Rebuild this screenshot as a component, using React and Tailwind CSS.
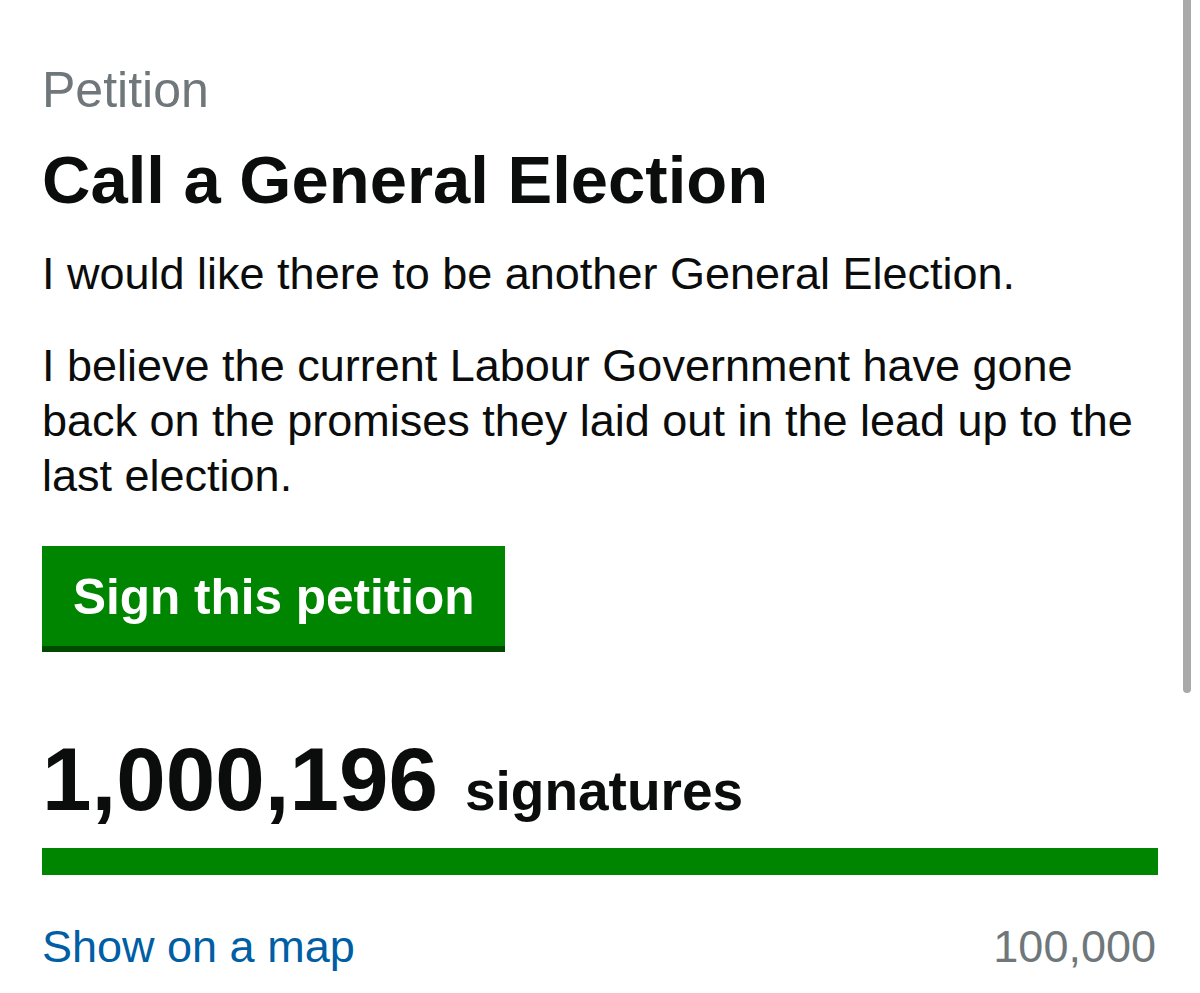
export default function App() {
    return (
        <div className="relative w-[1200px] h-[993px] bg-white overflow-hidden" style={{ fontFamily: '"Liberation Sans", Arial, Helvetica, sans-serif' }}>
            <div className="px-[42px] pt-[60px] text-[#0b0c0c]">
                <p className="text-[50px] leading-[60px] text-[#6f777b]">Petition</p>
                <h1 className="mt-[20px] text-[67px] leading-[79px] font-bold">Call a General Election</h1>
                <p className="mt-[27px] text-[45px] leading-[55px]">I would like there to be another General Election.</p>
                <p className="mt-[37px] text-[45px] leading-[55px]">
                    I believe the current Labour Government have gone back on the promises they laid out in the lead up to the last election.
                </p>
                <button className="mt-[43px] flex items-start h-[106px] pt-[22px] px-[31px] bg-[#008500] border-b-[6px] border-[#004a00] text-white text-[49.5px] leading-[57px] font-bold">
                    Sign this petition
                </button>
                <div className="mt-[83px] flex items-baseline gap-[27px] h-[88px]">
                    <span className="text-[89px] leading-[88px] font-bold">1,000,196</span>
                    <span className="text-[55px] leading-[60px] font-bold">signatures</span>
                </div>
                <div className="mt-[25px] h-[27px] w-full bg-[#008500]" />
                <div className="mt-[44px] flex justify-between items-baseline text-[45px] leading-[55px]">
                    <a className="text-[#005ea5]">Show on a map</a>
                    <span className="text-[#6f777b] pr-[2px]">100,000</span>
                </div>
            </div>
            <div className="absolute right-[9px] top-0 w-[8px] h-[693px] rounded-b-full bg-[#a9a9a9]" />
        </div>
    );
}
